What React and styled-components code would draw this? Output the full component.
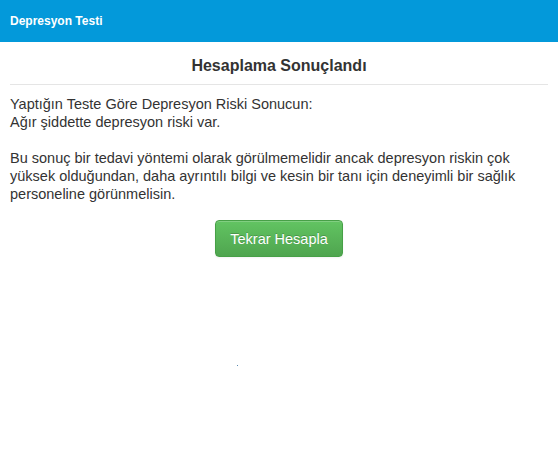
import React from "react";
import styled, { createGlobalStyle } from "styled-components";

const GlobalStyle = createGlobalStyle`
  html, body {
    margin: 0;
    padding: 0;
    background: #ffffff;
  }
  body {
    font-family: "Liberation Sans", Arial, sans-serif;
    color: #333333;
  }
`;

const Header = styled.header`
  height: 42px;
  display: flex;
  align-items: center;
  padding: 0 10px;
  background-color: #0399da;
  color: #ffffff;
  font-size: 12px;
  font-weight: 700;
`;

const Content = styled.main`
  padding: 0 10px;
`;

const Title = styled.h1`
  margin: 0;
  padding: 14px 0 8px;
  font-size: 16px;
  line-height: 20px;
  font-weight: 700;
  text-align: center;
  color: #333333;
  border-bottom: 1px solid #e5e5e5;
`;

const Paragraph = styled.p`
  margin: ${(props) => (props.first ? "10px 0 0" : "18px 0 0")};
  max-width: 520px;
  font-size: 14.5px;
  line-height: 18px;
`;

const Actions = styled.div`
  display: flex;
  justify-content: center;
  margin-top: 17px;
`;

const SuccessButton = styled.button`
  width: 128px;
  height: 37px;
  padding: 0;
  border: 1px solid #47a047;
  border-radius: 4px;
  background: linear-gradient(to bottom, #62c462, #4fa54f);
  color: #ffffff;
  font-family: "Liberation Sans", Arial, sans-serif;
  font-size: 14.5px;
  text-shadow: 0 -1px 0 rgba(0, 0, 0, 0.2);
  box-shadow: inset 0 1px 0 rgba(255, 255, 255, 0.2), 0 1px 2px rgba(0, 0, 0, 0.05);
  cursor: pointer;
`;

const Dot = styled.span`
  display: block;
  width: 1px;
  height: 1px;
  margin: 108px 0 0 227px;
  background: #5a8ab0;
`;

export default function App() {
  return (
    <>
      <GlobalStyle />
      <Header>Depresyon Testi</Header>
      <Content>
        <Title>Hesaplama Sonuçlandı</Title>
        <Paragraph first>
          Yaptığın Teste Göre Depresyon Riski Sonucun:
          <br />
          Ağır şiddette depresyon riski var.
        </Paragraph>
        <Paragraph>
          Bu sonuç bir tedavi yöntemi olarak görülmemelidir ancak depresyon riskin çok yüksek
          olduğundan, daha ayrıntılı bilgi ve kesin bir tanı için deneyimli bir sağlık personeline
          görünmelisin.
        </Paragraph>
        <Actions>
          <SuccessButton type="button">Tekrar Hesapla</SuccessButton>
        </Actions>
        <Dot />
      </Content>
    </>
  );
}
